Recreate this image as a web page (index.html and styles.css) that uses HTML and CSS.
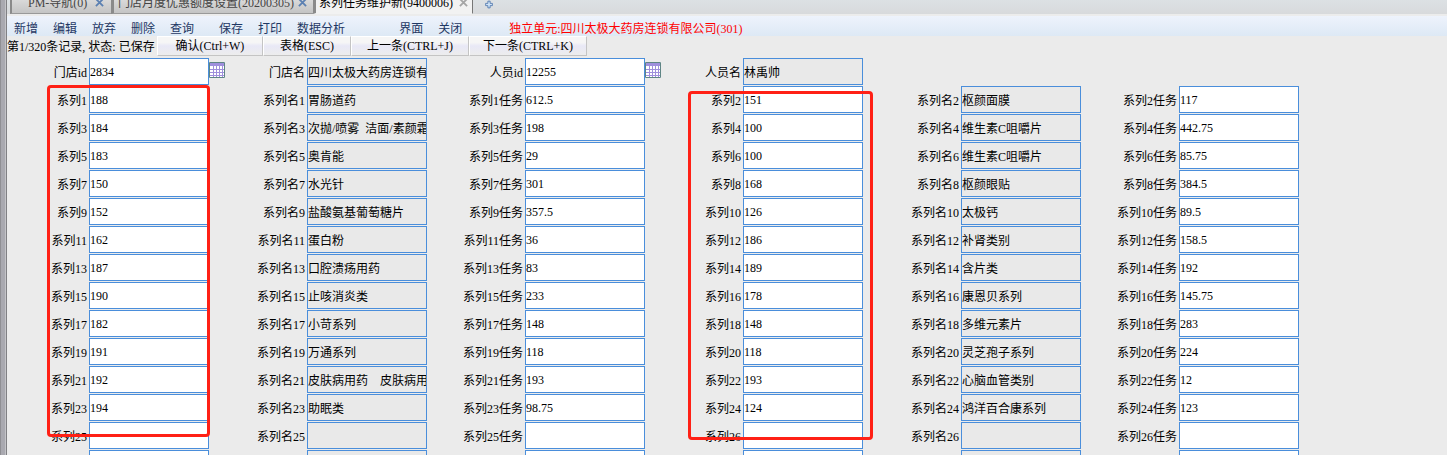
FILE: index.html
```
<!DOCTYPE html>
<html lang="zh-CN">
<head>
    <meta charset="UTF-8">
    <title>系列任务维护新</title>
    <meta name="viewport" content="width=device-width, initial-scale=1.0">
    <link rel="stylesheet" href="styles.css">
</head>
<body>
    <div class="splitter"></div>
    <div class="main">
        <nav class="tabs">
            <div class="tab tab-nav"><a href="#">PM-导航(0)</a><button class="close" aria-label="关闭"><svg viewBox="0 0 10 10"><path d="M1 1l8 8M9 1l-8 8"/></svg></button></div>
            <div class="tab tab-quota"><a href="#">门店月度优惠额度设置(20200305)</a><button class="close" aria-label="关闭"><svg viewBox="0 0 10 10"><path d="M1 1l8 8M9 1l-8 8"/></svg></button></div>
            <div class="tab tab-task active"><a href="#">系列任务维护新(9400006)</a><button class="close" aria-label="关闭"><svg viewBox="0 0 10 10"><path d="M1 1l8 8M9 1l-8 8"/></svg></button></div>
            <button class="add-tab" aria-label="新标签"><svg viewBox="0 0 12 12"><path d="M4.500 1.500h3v3h3v3h-3v3h-3v-3h-3v-3h3z"/></svg></button>
        </nav>

        <div class="toolbar">
            <div class="group">
                <button>新增</button>
                <button>编辑</button>
                <button>放弃</button>
                <button>删除</button>
                <button>查询</button>
            </div>
            <div class="group">
                <button>保存</button>
                <button>打印</button>
                <button>数据分析</button>
            </div>
            <div class="group wide">
                <button>界面</button>
                <button>关闭</button>
            </div>
            <span class="unit">独立单元:四川太极大药房连锁有限公司(301)</span>
        </div>

        <div class="status-bar">
            <span class="status">第1/320条记录, 状态: 已保存</span>
            <button class="confirm">确认(Ctrl+W)</button>
            <button class="table-view">表格(ESC)</button>
            <button class="step">上一条(CTRL+J)</button>
            <button class="step">下一条(CTRL+K)</button>
        </div>

        <form class="form">
            <div class="grid" id="grid"></div>
            <div class="mark mark-left"></div>
            <div class="mark mark-right"></div>
        </form>
    </div>

    <script>
        const grid = document.querySelector("#grid");

        // [系列, 系列名, 任务]
        const series = [
            ["188", "胃肠道药", "612.5"], ["151", "枢颜面膜", "117"],
            ["184", "次抛/喷雾  洁面/素颜霜", "198"], ["100", "维生素C咀嚼片", "442.75"],
            ["183", "奥肯能", "29"], ["100", "维生素C咀嚼片", "85.75"],
            ["150", "水光针", "301"], ["168", "枢颜眼贴", "384.5"],
            ["152", "盐酸氨基葡萄糖片", "357.5"], ["126", "太极钙", "89.5"],
            ["162", "蛋白粉", "36"], ["186", "补肾类别", "158.5"],
            ["187", "口腔溃疡用药", "83"], ["189", "含片类", "192"],
            ["190", "止咳消炎类", "233"], ["178", "康恩贝系列", "145.75"],
            ["182", "小苛系列", "148"], ["148", "多维元素片", "283"],
            ["191", "万通系列", "118"], ["118", "灵芝孢子系列", "224"],
            ["192", "皮肤病用药　皮肤病用药", "193"], ["193", "心脑血管类别", "12"],
            ["194", "助眠类", "98.75"], ["124", "鸿洋百合康系列", "123"],
            ["", "", ""], ["", "", ""],
            ["", "", ""], ["", "", ""]
        ];

        const calendar = `<button type="button" class="picker" aria-label="选择">
            <svg viewBox="0 0 16 16"><path fill="#fff" d="M0 0h16v16H0z"/><path fill="#9f8fdc" d="M1 1h14v3H1z"/>
            <path stroke="#9f8fdc" d="M1 7.500h14M1 10.500h14M1 13.500h14M4.500 4v11M7.500 4v11M10.500 4v11M13.500 4v11"/>
            <path fill="none" stroke="#5f8585" d="M.5.5h15v15H.5z"/></svg></button>`;

        let count = 0;

        function addField(label, value, readonly, picker) {
            const id = "f" + count++;
            const cell = document.createElement("div");
            cell.className = "field";
            cell.innerHTML = `<label for="${id}">${label}</label>
                <input type="text" id="${id}" value="${value}" ${readonly ? "readonly" : ""}>${picker ? calendar : ""}`;
            grid.appendChild(cell);
        }

        addField("门店id", "2834", false, true);
        addField("门店名", "四川太极大药房连锁有限公司", true);
        addField("人员id", "12255", false, true);
        addField("人员名", "林禹帅", true);

        series.forEach(([code, name, task], i) => {
            const n = i + 1;
            addField(`系列${n}`, code, false);
            addField(`系列名${n}`, name, true);
            addField(`系列${n}任务`, task, false);
        });
    </script>
</body>
</html>
```
FILE: styles.css
```
* {
    box-sizing: border-box;
}

body {
    margin: 0;
    height: 100vh;
    display: flex;
    overflow: hidden;
    background: #ebebeb;
    color: #000;
    font: 12px/16px "Liberation Serif", "Noto Sans CJK SC", serif;
}

button,
input {
    font: inherit;
    color: inherit;
    margin: 0;
    padding: 0;
    border: none;
    background: none;
}

svg {
    display: block;
}

.splitter {
    flex: none;
    width: 7px;
    background: linear-gradient(90deg, #8f8f94 0 1px, #a9a9b0 1px 5px, #c4c4c8 5px 6px, #808084 6px);
}

.main {
    flex: 1;
    min-width: 0;
}

/* tabs */
.tabs {
    height: 16px;
    padding-left: 3px;
    display: flex;
    align-items: flex-start;
    overflow: hidden;
    background: linear-gradient(#dce1e4, #d8dadc);
    border-bottom: 2px solid #ececec;
}

.tab {
    height: 14px;
    display: flex;
    align-items: flex-end;
    justify-content: space-between;
    padding: 0 7px 2px 16px;
    border-left: 2px solid #8a8a8a;
    border-bottom: 1px solid #999;
    background: linear-gradient(#d9d9d9, #c4c4c4);
    white-space: nowrap;
}

.tab a {
    flex: none;
    color: #444;
    text-decoration: none;
}

.tab-nav {
    width: 101px;
}

.tab-quota {
    width: 202px;
    padding: 0 6px 2px 4px;
    border-left-width: 3px;
}

.tab-task {
    width: 160px;
    padding: 0 4px 2px 3px;
    border-left-width: 3px;
    border-right: 1px solid #777;
}

.tab.active {
    background: #f2f2f2;
    border-bottom-color: #f2f2f2;
}

.tab.active a {
    color: #000;
}

.close {
    flex: none;
    margin-bottom: 4px;
}

.close svg {
    width: 9px;
    height: 9px;
    stroke: #5b80b2;
    stroke-width: 2;
}

.active .close svg {
    stroke: #a5a5a5;
}

.add-tab {
    margin-left: 10px;
}

.add-tab svg {
    width: 12px;
    height: 9px;
    fill: #cfe3f7;
    stroke: #3f69a5;
}

/* toolbar */
.toolbar {
    height: 20px;
    display: flex;
    align-items: center;
    background: linear-gradient(#eef3fc, #dde9f5);
    color: #1f3864;
}

.group {
    display: flex;
    gap: 15px;
    padding: 6px 10px 0 7px;
}

.group + .group {
    padding-left: 15px;
}

.group + .wide {
    padding-left: 44px;
}

.unit {
    margin-left: 37px;
    padding-top: 6px;
    color: #f00;
}

/* status */
.status-bar {
    height: 22px;
    display: flex;
    align-items: flex-start;
}

.status {
    width: 150px;
    padding-top: 3px;
    white-space: nowrap;
}

.status-bar button {
    height: 20px;
    border: 1px solid #fff;
    border-right-color: #c4c4c4;
    border-bottom-color: #c4c4c4;
    background: linear-gradient(#f6f6f6 30%, #e8e8f6 50%, #ededed);
}

.status-bar .confirm {
    width: 106px;
}

.status-bar .table-view {
    width: 88px;
}

.status-bar .step {
    width: 118px;
}

/* form */
.form {
    position: relative;
}

.grid {
    display: grid;
    grid-template-columns: repeat(6, 218px);
    grid-auto-rows: 28px;
}

.field {
    display: flex;
    align-items: flex-start;
}

/* the head row has only four fields */
.field:nth-child(5) {
    grid-column-start: 1;
}

.field label {
    width: 82px;
    padding-right: 2px;
    line-height: 30px;
    text-align: right;
    white-space: nowrap;
}

.field input {
    width: 120px;
    height: 27px;
    padding-top: 2px;
    border: 1px solid #4a8edb;
    background: #fff;
}

.field input:read-only {
    padding-top: 0;
    background: #e9e9e9;
}

.picker {
    margin-top: 4px;
}

.picker svg {
    width: 16px;
    height: 16px;
}

.mark {
    position: absolute;
    border: 3px solid #ff2015;
    border-radius: 4px;
    pointer-events: none;
}

.mark-left {
    top: 27px;
    left: 40px;
    width: 163px;
    height: 352px;
}

.mark-right {
    top: 33px;
    left: 681px;
    width: 185px;
    height: 349px;
}
```
